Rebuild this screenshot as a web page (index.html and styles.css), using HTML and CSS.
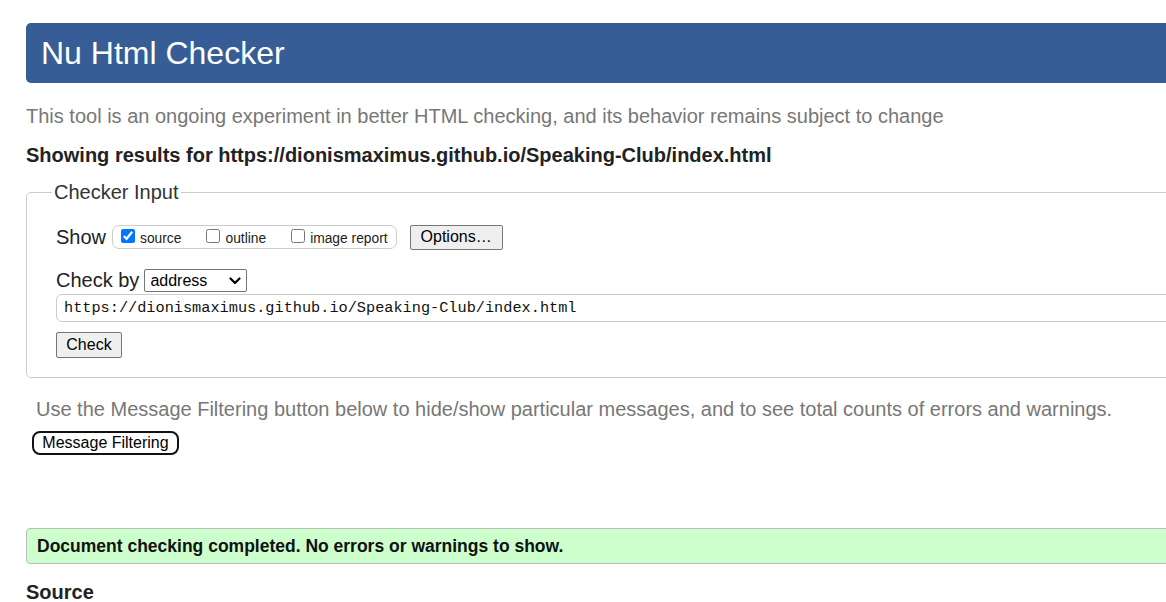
FILE: index.html
```html
<!DOCTYPE html>
<html lang="en">
<head>
<meta charset="utf-8">
<title>Nu Html Checker</title>
<link rel="stylesheet" href="styles.css">
</head>
<body>
<div class="page">
  <h1 class="title">Nu Html Checker</h1>
  <p class="intro">This tool is an ongoing experiment in better HTML checking, and its behavior remains subject to change</p>
  <p class="results">Showing results for https://dionismaximus.github.io/Speaking-Club/index.html</p>
  <fieldset class="input-box">
    <legend class="legend">Checker Input</legend>
    <div class="row row-show">
      <span class="row-label">Show</span>
      <span class="pill">
        <label class="opt"><input type="checkbox" class="cb" checked><span>source</span></label>
        <label class="opt"><input type="checkbox" class="cb"><span>outline</span></label>
        <label class="opt last"><input type="checkbox" class="cb"><span>image report</span></label>
      </span>
      <button class="btn btn-options" type="button">Options…</button>
    </div>
    <div class="row row-by">
      <span class="row-label">Check by</span>
      <span class="select-wrap">
        <select class="select"><option>address</option></select>
        <svg class="chev" width="12" height="8" viewBox="0 0 12 8"><path d="M1.5 1.5 L6 6 L10.5 1.5" fill="none" stroke="#000" stroke-width="2.2" stroke-linecap="round" stroke-linejoin="round"/></svg>
      </span>
    </div>
    <input class="url" type="text" value="https://dionismaximus.github.io/Speaking-Club/index.html">
    <div class="row row-check">
      <button class="btn btn-check" type="button">Check</button>
    </div>
  </fieldset>
  <p class="filter-note">Use the Message Filtering button below to hide/show particular messages, and to see total counts of errors and warnings.</p>
  <button class="btn-filter" type="button">Message Filtering</button>
  <div class="success">Document checking completed. No errors or warnings to show.</div>
  <h2 class="source">Source</h2>
</div>
</body>
</html>
```

FILE: styles.css
```css
html {
  overflow: hidden;
}
body {
  margin: 0;
  background: #fff;
  font-family: "Liberation Sans", Arial, sans-serif;
  color: #222;
}
.page {
  width: 1200px;
  padding-left: 26px;
}
.title {
  margin: 23px 0 0;
  height: 60px;
  line-height: 60px;
  padding-left: 15px;
  font-size: 32px;
  font-weight: normal;
  color: #fff;
  background: #365d95;
  border-radius: 5px 0 0 5px;
}
.intro {
  margin: 22px 0 0;
  font-size: 20px;
  line-height: 23px;
  color: #777;
}
.results {
  margin: 16px 0 0;
  font-size: 20px;
  line-height: 23px;
  font-weight: bold;
  color: #222;
}
.input-box {
  margin: 14px 0 0;
  padding: 0 10px 19px 29px;
  border: 1px solid #ccc;
  border-radius: 5px;
  min-width: 0;
}
.legend {
  margin-left: -4px;
  padding: 0 2px;
  font-size: 20px;
  line-height: 23px;
  color: #333;
}
.row {
  display: flex;
  align-items: center;
}
.row-show {
  margin-top: 20px;
  height: 26px;
}
.row-label {
  font-size: 20px;
  line-height: 23px;
  color: #222;
}
.pill {
  display: inline-flex;
  align-items: center;
  height: 22px;
  margin-left: 6px;
  padding: 0 8px 0 8px;
  border: 1px solid #ccc;
  border-radius: 7px;
  font-size: 13.8px;
  color: #222;
}
.opt {
  display: inline-flex;
  align-items: center;
  margin-right: 25px;
}
.opt.last {
  margin-right: 0;
}
.opt span {
  margin-left: 5px;
  padding-top: 3px;
}
.cb {
  margin: 0;
  width: 14px;
  height: 14px;
  margin-top: -2px;
}
.btn {
  font-family: "Liberation Sans", Arial, sans-serif;
  font-size: 16px;
  color: #000;
  background: #efefef;
  border: 1px solid #767676;
  border-radius: 2px;
  padding: 0 10px;
  height: 25px;
}
.btn-options {
  margin-left: 13px;
  height: 25px;
  width: 93px;
}
.row-by {
  margin-top: 18px;
  height: 24px;
}
.select-wrap {
  position: relative;
  display: inline-block;
  margin-left: 5px;
  height: 23px;
}
.select {
  appearance: none;
  -webkit-appearance: none;
  width: 103px;
  height: 23px;
  padding: 0 0 0 5px;
  font-family: "Liberation Sans", Arial, sans-serif;
  font-size: 16px;
  color: #000;
  background: #fff;
  border: 1px solid #767676;
  border-radius: 2px;
}
.chev {
  position: absolute;
  right: 6px;
  top: 8px;
  pointer-events: none;
}
.url {
  display: block;
  box-sizing: border-box;
  width: 100%;
  height: 28px;
  margin: 2px 0 0;
  padding: 0 7px;
  font-family: "Liberation Mono", "DejaVu Sans Mono", monospace;
  font-size: 15.25px;
  color: #111;
  border: 1px solid #ccc;
  border-radius: 6px;
  outline: none;
}
.row-check {
  margin-top: 10px;
}
.btn-check {
  height: 26px;
  width: 66px;
  padding: 0;
}
.filter-note {
  margin: 20px 0 0;
  padding-left: 10px;
  font-size: 20px;
  line-height: 23px;
  color: #777;
}
.btn-filter {
  display: block;
  margin: 10px 0 0 6px;
  height: 24px;
  width: 147px;
  padding: 0;
  font-family: "Liberation Sans", Arial, sans-serif;
  font-size: 16px;
  color: #000;
  background: #fff;
  border: 2px solid #111;
  border-radius: 8px;
}
.success {
  margin-top: 73px;
  height: 34px;
  line-height: 34px;
  padding-left: 10px;
  font-size: 17.5px;
  font-weight: bold;
  color: #111;
  background: #ccffcc;
  border: 1px solid #bbb;
  border-radius: 4px;
}
.source {
  margin: 17px 0 0;
  font-size: 20px;
  line-height: 23px;
  font-weight: bold;
  color: #222;
}
```
